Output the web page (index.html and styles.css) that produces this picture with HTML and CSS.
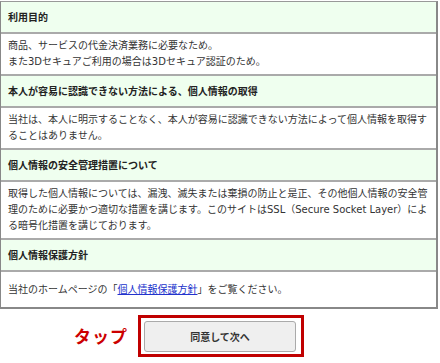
FILE: index.html
```html
<!DOCTYPE html>
<html lang="ja">
<head>
<meta charset="utf-8">
<link rel="stylesheet" href="styles.css">
</head>
<body>
<div class="policy">
  <div class="head">利用目的</div>
  <div class="body">商品、サービスの代金決済業務に必要なため。<br>また3Dセキュアご利用の場合は3Dセキュア認証のため。</div>
  <div class="head">本人が容易に認識できない方法による、個人情報の取得</div>
  <div class="body">当社は、本人に明示することなく、本人が容易に認識できない方法によって個人情報を取得することはありません。</div>
  <div class="head">個人情報の安全管理措置について</div>
  <div class="body">取得した個人情報については、漏洩、滅失または棄損の防止と是正、その他個人情報の安全管理のために必要かつ適切な措置を講じます。このサイトはSSL（Secure Socket Layer）による暗号化措置を講じております。</div>
  <div class="head">個人情報保護方針</div>
  <div class="body body-last">当社のホームページの「<a class="link" href="#">個人情報保護方針</a>」をご覧ください。</div>
</div>
<div class="actions">
  <div class="highlight">
    <span class="tap">タップ</span>
    <button class="next" type="button">同意して次へ</button>
  </div>
</div>
</body>
</html>
```
FILE: styles.css
```css
html, body {
  margin: 0;
  padding: 0;
  background: #fff;
}
body {
  width: 440px;
  height: 363px;
  overflow: hidden;
  font-family: "DejaVu Sans", "Noto Sans CJK JP", sans-serif;
  font-size: 10px;
  color: #333;
}
.policy {
  margin-top: 1px;
  width: 435px;
  border-top: 1px solid #999;
  border-left: 1px solid #888;
  border-right: 2px solid #888;
  border-bottom: 2px solid #888;
}
.head {
  background: #efffef;
  font-weight: bold;
  color: #222;
  line-height: 16px;
  padding: 8px 6px 6px 7px;
  border-bottom: 2px solid #aaa;
}
.body {
  background: #fff;
  line-height: 16px;
  padding: 4px 6px 4px 7px;
  border-bottom: 2px solid #aaa;
}
.body-last {
  padding: 10px 6px 9px 7px;
  border-bottom: 0;
}
.link {
  color: #2233cc;
  text-decoration: underline;
}
.actions {
  display: flex;
  justify-content: center;
  padding-top: 6px;
  padding-left: 2px;
}
.highlight {
  position: relative;
  border: 3px solid #c00000;
  padding: 3px 5px 2px 3px;
}
.tap {
  position: absolute;
  right: calc(100% + 13px);
  top: 9px;
  font-size: 17px;
  font-weight: bold;
  color: #cc0000;
  white-space: nowrap;
  line-height: 20px;
  letter-spacing: 1px;
}
.next {
  display: block;
  width: 152px;
  height: 31px;
  background: #efefef;
  border: 1px solid #aaa;
  border-radius: 3px;
  font-family: "DejaVu Sans", "Noto Sans CJK JP", sans-serif;
  font-size: 10px;
  font-weight: bold;
  color: #333;
  padding: 0;
}
```
